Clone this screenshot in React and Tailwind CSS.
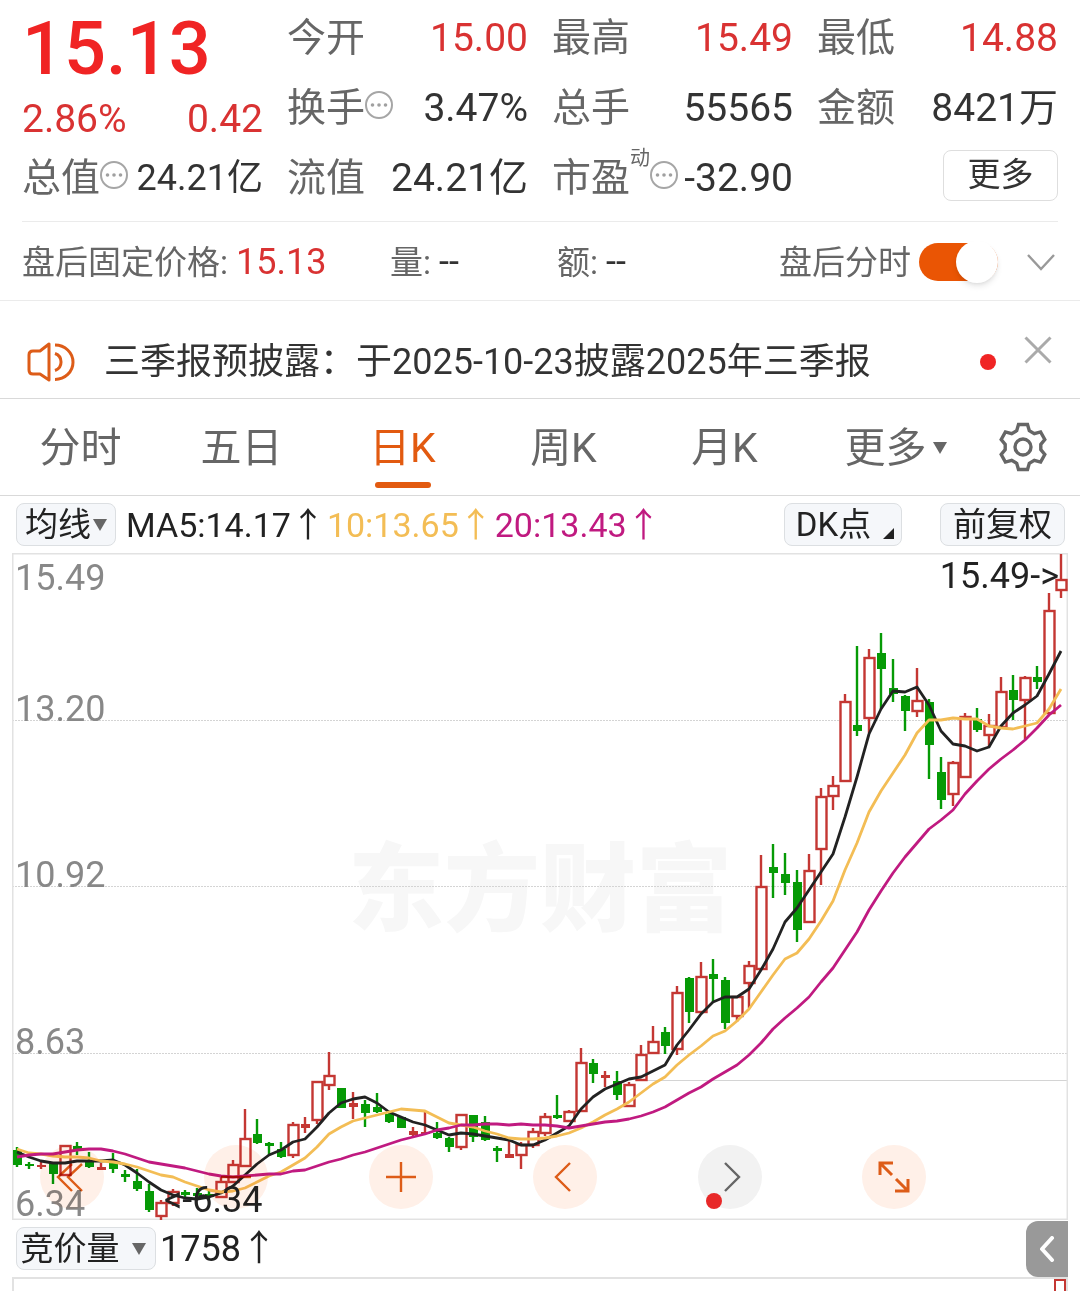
import { useState } from 'react';

const RED = '#c43733';
const GREEN = '#069a06';

// [rising, high, body top, body bottom, low], all as y on the chart canvas
const CANDLES = [
    [0, 1147, 1150, 1165, 1167], [0, 1162, 1164, 1166, 1169], [1, 1162, 1165, 1167, 1169], [0, 1163, 1164, 1174, 1184],
    [1, 1145, 1146, 1175, 1176], [0, 1142, 1146, 1151, 1155], [0, 1152, 1160, 1167, 1168], [1, 1163, 1167, 1170, 1170],
    [0, 1153, 1163, 1169, 1173], [0, 1170, 1174, 1177, 1182], [0, 1169, 1181, 1189, 1191], [0, 1184, 1191, 1210, 1212],
    [1, 1200, 1203, 1216, 1220], [1, 1189, 1192, 1203, 1206], [0, 1190, 1192, 1195, 1197], [0, 1188, 1193, 1196, 1198],
    [0, 1191, 1194, 1197, 1199], [1, 1177, 1182, 1197, 1198], [1, 1160, 1165, 1182, 1183], [1, 1109, 1139, 1166, 1167],
    [0, 1119, 1134, 1143, 1144], [0, 1142, 1143, 1146, 1155], [0, 1142, 1149, 1157, 1158], [1, 1122, 1125, 1155, 1158],
    [1, 1117, 1124, 1128, 1133], [1, 1081, 1082, 1120, 1124], [1, 1052, 1076, 1085, 1090], [0, 1088, 1088, 1108, 1108],
    [1, 1092, 1103, 1107, 1119], [0, 1100, 1104, 1113, 1127], [0, 1093, 1107, 1112, 1113], [0, 1113, 1114, 1122, 1123],
    [0, 1117, 1117, 1128, 1128], [1, 1127, 1131, 1135, 1137], [1, 1112, 1132, 1134, 1134], [0, 1122, 1133, 1138, 1139],
    [0, 1137, 1138, 1147, 1152], [1, 1114, 1115, 1147, 1150], [0, 1115, 1115, 1137, 1142], [0, 1116, 1122, 1140, 1141],
    [0, 1146, 1148, 1151, 1162], [1, 1141, 1154, 1158, 1158], [1, 1142, 1145, 1155, 1169], [1, 1128, 1132, 1145, 1148],
    [1, 1113, 1117, 1133, 1136], [0, 1095, 1115, 1118, 1119], [1, 1110, 1112, 1121, 1122], [1, 1048, 1063, 1111, 1112],
    [0, 1059, 1063, 1074, 1083], [1, 1071, 1075, 1078, 1087], [0, 1071, 1081, 1095, 1100], [1, 1082, 1085, 1106, 1107],
    [1, 1045, 1055, 1080, 1081], [1, 1026, 1042, 1053, 1054], [0, 1027, 1032, 1046, 1054], [1, 986, 993, 1049, 1055],
    [0, 977, 978, 1012, 1023], [1, 962, 977, 1012, 1013], [0, 959, 974, 979, 1002], [0, 977, 980, 1023, 1029],
    [1, 996, 997, 1016, 1022], [1, 961, 966, 983, 1008], [1, 855, 887, 969, 970], [0, 844, 867, 873, 898],
    [0, 853, 874, 883, 895], [0, 870, 882, 930, 942], [1, 854, 871, 922, 923], [1, 788, 797, 849, 885],
    [1, 776, 786, 796, 810], [1, 694, 702, 781, 782], [0, 646, 725, 731, 736], [1, 649, 658, 718, 733],
    [0, 633, 653, 669, 709], [0, 659, 688, 694, 702], [0, 695, 696, 711, 731], [1, 668, 701, 711, 717],
    [0, 699, 702, 745, 779], [0, 757, 772, 800, 809], [1, 761, 763, 794, 806], [1, 713, 717, 777, 778],
    [0, 708, 719, 730, 732], [1, 714, 726, 735, 746], [1, 677, 692, 727, 728], [0, 675, 690, 700, 720],
    [1, 676, 678, 700, 739], [0, 666, 677, 682, 689], [1, 593, 611, 713, 714], [1, 554, 580, 590, 598],
];

const AVERAGES = [
    {
        color: '#222222',
        ys: [1152, 1157, 1161, 1163, 1163, 1161, 1161, 1161, 1160, 1165, 1173, 1182, 1190, 1195, 1198, 1199, 1197, 1193, 1186, 1175, 1164, 1155,
            1150, 1142, 1139, 1127, 1113, 1103, 1099, 1097, 1103, 1112, 1117, 1122, 1125, 1130, 1135, 1133, 1134, 1136, 1138, 1140, 1145, 1145,
            1140, 1133, 1126, 1109, 1097, 1089, 1084, 1079, 1077, 1071, 1065, 1045, 1030, 1014, 1002, 997, 997, 989, 970, 949, 922, 908,
            890, 872, 854, 817, 777, 734, 709, 691, 692, 687, 705, 731, 744, 746, 751, 747, 726, 713, 705, 696, 674, 651],
    },
    {
        color: '#f3bd55',
        ys: [1149, 1153, 1154, 1156, 1157, 1157, 1158, 1161, 1162, 1164, 1167, 1171, 1175, 1177, 1182, 1186, 1190, 1192, 1191, 1188, 1182, 1176,
            1172, 1165, 1158, 1147, 1134, 1127, 1121, 1118, 1115, 1112, 1109, 1110, 1111, 1117, 1123, 1125, 1127, 1131, 1134, 1138, 1139, 1139,
            1138, 1136, 1133, 1128, 1122, 1115, 1109, 1102, 1093, 1084, 1077, 1065, 1055, 1046, 1036, 1031, 1021, 1009, 992, 975, 959, 953,
            939, 921, 901, 870, 843, 812, 791, 773, 755, 733, 720, 720, 718, 719, 719, 726, 728, 729, 726, 723, 709, 689],
    },
    {
        color: '#c01a80',
        ys: [1157, 1155, 1154, 1154, 1152, 1150, 1149, 1149, 1151, 1154, 1158, 1162, 1164, 1166, 1168, 1171, 1174, 1176, 1177, 1176, 1175, 1174,
            1174, 1171, 1170, 1166, 1162, 1159, 1155, 1152, 1148, 1144, 1140, 1137, 1134, 1130, 1128, 1125, 1125, 1124, 1124, 1125, 1124, 1125,
            1125, 1126, 1128, 1126, 1124, 1122, 1121, 1119, 1116, 1112, 1107, 1100, 1093, 1087, 1079, 1072, 1065, 1055, 1043, 1029, 1018, 1008,
            997, 982, 968, 950, 932, 910, 891, 873, 857, 843, 829, 820, 810, 794, 781, 769, 759, 750, 740, 728, 715, 705],
    },
];

const AXIS = [
    { label: '15.49', y: 590 },
    { label: '13.20', y: 721, line: 720 },
    { label: '10.92', y: 887, line: 886 },
    { label: '8.63', y: 1054, line: 1053 },
    { label: '6.34', y: 1216 },
];

const TABS = ['分时', '五日', '日K', '周K', '月K'];

const candleX = i => 17 + 12 * i;

function MoreDots() {
    return (
        <svg viewBox="0 0 28 28" className="w-7 h-7 mb-1.5 shrink-0" aria-hidden="true">
            <circle cx="14" cy="14" r="13" fill="none" stroke="#a6a6a6" strokeWidth="2" />
            <circle cx="7.5" cy="14" r="1.8" fill="#a0a0a0" />
            <circle cx="14" cy="14" r="1.8" fill="#a0a0a0" />
            <circle cx="20.5" cy="14" r="1.8" fill="#a0a0a0" />
        </svg>
    );
}

function Stat({ label, value, up, info, sup, small }) {
    return (
        <div className="flex items-center justify-between h-[70px] whitespace-nowrap">
            <span className="flex items-center text-[39px] text-[#666]">
                {label}
                {sup && <sup className="text-xl leading-none top-0 mb-10">{sup}</sup>}
                {info && <MoreDots />}
            </span>
            <span className={`${small ? 'text-[36px]' : 'text-[39px]'} ${up ? 'text-[#d93232]' : 'text-[#333]'}`}>{value}</span>
        </div>
    );
}

function Quote() {
    return (
        <section className="mx-[22px] pt-[3px] pb-2 grid grid-cols-4 gap-x-6 border-b border-[#ebebeb]">
            <div>
                <div className="h-[140px] flex flex-col">
                    <div className="h-[92px] flex items-center text-[74px] font-medium text-[#f02424]">15.13</div>
                    <div className="flex flex-1 items-center justify-between text-[39px] text-[#d93232]">
                        <span>2.86%</span>
                        <span>0.42</span>
                    </div>
                </div>
                <Stat label="总值" value="24.21亿" info small />
            </div>
            <div>
                <Stat label="今开" value="15.00" up />
                <Stat label="换手" value="3.47%" info />
                <Stat label="流值" value="24.21亿" />
            </div>
            <div>
                <Stat label="最高" value="15.49" up />
                <Stat label="总手" value="55565" />
                <Stat label="市盈" value="-32.90" info sup="动" />
            </div>
            <div>
                <Stat label="最低" value="14.88" up />
                <Stat label="金额" value="8421万" />
                <div className="h-[64px] flex items-center justify-end">
                    <button className="w-[115px] h-[51px] pb-0.5 rounded-lg border border-[#dedede] text-[33px] text-[#333] cursor-pointer">更多</button>
                </div>
            </div>
        </section>
    );
}

function AfterHours() {
    const [on, setOn] = useState(true);
    return (
        <section className="h-[79px] pt-0.5 pl-[22px] pr-6 flex items-center text-[33px] text-[#666] border-b border-[#ebebeb] whitespace-nowrap">
            <div className="w-[368px] flex items-center gap-2">盘后固定价格:<span className="text-[36px] text-[#d93232]">15.13</span></div>
            <div className="w-[167px] flex items-center gap-2">量:<span className="text-[36px] text-[#333]">--</span></div>
            <div className="flex-1 flex items-center gap-2">额:<span className="text-[36px] text-[#333]">--</span></div>
            <label className="flex items-center gap-2 cursor-pointer">
                盘后分时
                <input type="checkbox" checked={on} onChange={e => setOn(e.target.checked)} className="sr-only peer" />
                <span className="w-[79px] h-[38px] rounded-full flex items-center bg-[#ccc] peer-checked:bg-[#ea5504] peer-checked:justify-end">
                    <span className="w-[42px] h-[42px] shrink-0 rounded-full bg-white shadow-md" />
                </span>
            </label>
            <button className="ml-7 cursor-pointer" aria-label="展开">
                <svg viewBox="0 0 30 18" className="w-[30px] h-[18px]" fill="none" stroke="#999" strokeWidth="2.4">
                    <path d="M2 2l13 14L28 2" />
                </svg>
            </button>
        </section>
    );
}

function Notice() {
    return (
        <section className="h-[98px] pl-[27px] pr-7 pt-6 flex items-center border-b border-[#d9d9d9]">
            <svg viewBox="0 0 48 40" className="w-12 h-10 shrink-0" fill="none" stroke="#dd5c18" strokeWidth="3" aria-hidden="true">
                <path d="M22 2v36l-9-6H6q-4 0-4-4V13q0-4 4-4h7z" strokeLinejoin="round" />
                <path d="M28 11.500a9 9 0 0 1 0 17M28 3a18 17.200 0 0 1 0 34.400" />
            </svg>
            <p className="ml-[29px] flex-1 text-[36px] text-[#333] whitespace-nowrap">三季报预披露：于2025-10-23披露2025年三季报</p>
            <span className="w-4 h-4 rounded-full bg-[#f02424]" />
            <button className="ml-7 mb-6 cursor-pointer" aria-label="关闭">
                <svg viewBox="0 0 28 28" className="w-7 h-7" fill="none" stroke="#aaa" strokeWidth="3">
                    <path d="M1.500 1.500l25 25M26.500 1.500l-25 25" />
                </svg>
            </button>
        </section>
    );
}

function PeriodTabs() {
    const [active, setActive] = useState('日K');
    return (
        <nav className="h-[97px] flex border-b border-[#d9d9d9] text-[41px] text-[#666]">
            {TABS.map(t => (
                <button
                    key={t}
                    onClick={() => setActive(t)}
                    className={`relative flex-[161] pt-0.5 cursor-pointer ${active === t ? 'text-[#e25a10]' : ''}`}
                >
                    {t}
                    {active === t && <span className="absolute bottom-[7px] inset-x-0 mx-auto w-14 h-1.5 rounded-full bg-[#e25a10]" />}
                </button>
            ))}
            <button className="flex-[181] pt-0.5 flex items-center justify-center gap-1.5 cursor-pointer">
                更多
                <svg viewBox="0 0 14 12" className="w-3.5 h-3" fill="#666"><path d="M0 0h14L7 12z" /></svg>
            </button>
            <button className="flex-[74] pr-5 flex items-center justify-center cursor-pointer" aria-label="设置">
                <svg viewBox="0 0 48 50" className="w-12 h-[50px] shrink-0" fill="none" stroke="#666" strokeWidth="3.4">
                    <path d="M19.500 2.500h9l1.800 6.200 5 2.900 6.300-1.700 4.200 7.600-4 4.800v5.400l4 4.800-4.200 7.600-6.300-1.700-5 2.900-1.800 6.200h-9l-1.800-6.200-5-2.900-6.300 1.700-4.200-7.600 4-4.800v-5.400l-4-4.800 4.200-7.600 6.300 1.700 5-2.900z" />
                    <circle cx="24" cy="25" r="8" />
                </svg>
            </button>
        </nav>
    );
}

function Indicators() {
    return (
        <section className="h-[57px] pl-4 pr-[15px] flex items-center gap-0.5 text-[34px] whitespace-nowrap">
            <button className="w-[100px] h-[43px] flex items-center justify-center gap-0.5 rounded-lg border border-[#dcdfe2] bg-[#f5f7fa] text-[33px] text-[#222] leading-none cursor-pointer">
                均线
                <svg viewBox="0 0 14 12" className="w-3.5 h-3 shrink-0" fill="#666"><path d="M0 0h14L7 12z" /></svg>
            </button>
            <span className="ml-2 text-[#222]">MA5:14.17↑</span>
            <span className="text-[#f3bd55]">10:13.65↑</span>
            <span className="text-[#c01a80]">20:13.43↑</span>
            <button className="ml-auto w-[118px] h-[43px] pl-1 flex items-center justify-center gap-3 rounded-lg border border-[#dcdfe2] bg-[#f5f7fa] text-[33px] text-[#222] leading-none cursor-pointer">
                DK点
                <svg viewBox="0 0 11 11" className="w-[11px] h-[11px] shrink-0 self-end mb-1.5" fill="#222"><path d="M11 0v11H0z" /></svg>
            </button>
            <button className="ml-9 w-[125px] h-[43px] rounded-lg border border-[#dcdfe2] bg-[#f5f7fa] text-[33px] text-[#222] leading-none cursor-pointer">前复权</button>
        </section>
    );
}

function Candle({ i, data }) {
    const [rising, high, top, bottom, low] = data;
    const x = candleX(i);
    if (rising && bottom - top > 4) {
        return (
            <g stroke={RED} strokeWidth="2.4" fill="none">
                <path d={`M${x} ${high}V${top}M${x} ${bottom}V${low}`} />
                <rect x={x - 4.5} y={top} width="10" height={bottom - top} fill="#fff" />
            </g>
        );
    }
    const color = rising ? RED : GREEN;
    return (
        <g>
            <path d={`M${x} ${high}V${low}`} stroke={color} strokeWidth="2.4" />
            <rect x={x - 4} y={top} width="9" height={bottom - top} fill={color} />
        </g>
    );
}

const TOOLS = [
    { label: '最早', icon: <path d="M16 3L2 16l14 14M26 3L12 16l14 14" /> },
    { label: '缩小', icon: <path d="M1 16h30" /> },
    { label: '放大', icon: <path d="M1 16h30M16 1v30" /> },
    { label: '向左', icon: <path d="M21 2L7 16l14 14" /> },
    { label: '向右', icon: <path d="M11 2l14 14-14 14" />, muted: true },
    { label: '全屏', icon: <path d="M2 14V2h13M2 2l12 12M30 18v12H17M30 30L18 18" strokeWidth="3" /> },
];

function Chart() {
    return (
        <section className="relative mx-3">
            <svg viewBox="12 553 1056 667" className="block w-full overflow-visible">
                <text x="540" y="923" textAnchor="middle" fontSize="96" fontWeight="900" fill="#f7f7f7">东方财富</text>
                {AXIS.filter(a => a.line).map(a => (
                    <path key={a.label} d={`M12 ${a.line + 0.5}H1068`} stroke="#d4d4d4" strokeDasharray="2 1" />
                ))}
                <path d="M646 1080.500H1068" stroke="#d4d4d4" />
                <rect x="12.750" y="553.750" width="1054.500" height="665.500" fill="none" stroke="#e2e2e2" strokeWidth="1.5" />
                {CANDLES.map((c, i) => <Candle key={i} i={i} data={c} />)}
                {AXIS.map(a => (
                    <text key={a.label} x="15" y={a.y} fontSize="36" fill="#888">{a.label}</text>
                ))}
                {AVERAGES.map(a => (
                    <polyline
                        key={a.color}
                        points={a.ys.map((y, i) => `${candleX(i)},${y}`).join(' ')}
                        fill="none"
                        stroke={a.color}
                        strokeWidth="2.8"
                        strokeLinejoin="round"
                    />
                ))}
                <text x="1059" y="588" textAnchor="end" fontSize="36" fill="#222">15.49-&gt;</text>
                <text x="164" y="1212" fontSize="36" fill="#222">&lt;-6.34</text>
            </svg>
            <div className="absolute bottom-[11px] left-7 right-[142px] flex justify-between mix-blend-multiply">
                {TOOLS.map(t => (
                    <button
                        key={t.label}
                        aria-label={t.label}
                        className={`relative w-16 h-16 rounded-full flex items-center justify-center cursor-pointer ${t.muted ? 'bg-[#f2f2f2] text-[#666]' : 'bg-[#fff0e8] text-[#dd5c18]'}`}
                    >
                        <svg viewBox="0 0 32 32" className="w-8 h-8" fill="none" stroke="currentColor" strokeWidth="2.4">{t.icon}</svg>
                        {t.muted && <span className="absolute bottom-0 left-2 w-4 h-4 rounded-full bg-[#e82828]" />}
                    </button>
                ))}
            </div>
        </section>
    );
}

function Auction() {
    return (
        <section className="mx-3">
            <div className="h-[57px] pl-1 flex items-center">
                <button className="w-[140px] h-[43px] pr-1.5 flex items-center justify-center gap-3 rounded-lg border border-[#dcdfe2] bg-[#f5f7fa] text-[33px] text-[#222] leading-none cursor-pointer whitespace-nowrap">
                    竞价量
                    <svg viewBox="0 0 14 12" className="w-3.5 h-3 shrink-0" fill="#666"><path d="M0 0h14L7 12z" /></svg>
                </button>
                <span className="ml-1 text-[36px] text-[#222]">1758↑</span>
                <button className="ml-auto w-[42px] h-14 rounded-l-xl bg-[#999] flex items-center justify-center cursor-pointer" aria-label="收起">
                    <svg viewBox="0 0 16 26" className="w-4 h-[26px]" fill="none" stroke="#fff" strokeWidth="4" strokeLinecap="round" strokeLinejoin="round">
                        <path d="M13 2L3 13l10 11" />
                    </svg>
                </button>
            </div>
            <div className="h-3.5 border-2 border-b-0 border-[#e2e2e2] flex justify-end">
                <span className="w-3 border-2 border-b-0 border-[#c43733]" />
            </div>
        </section>
    );
}

export default function App() {
    return (
        <main className="bg-white overflow-hidden leading-none font-[Roboto,'Noto_Sans_CJK_SC',sans-serif]">
            <Quote />
            <AfterHours />
            <Notice />
            <PeriodTabs />
            <Indicators />
            <Chart />
            <Auction />
        </main>
    );
}
